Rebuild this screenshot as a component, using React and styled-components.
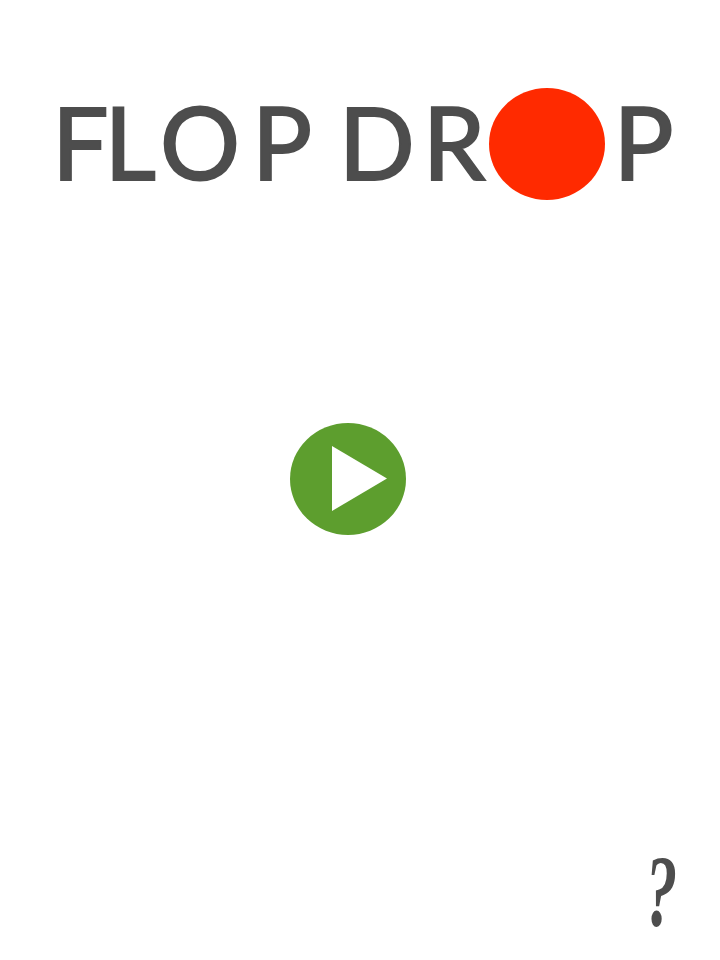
import React from 'react';
import styled, { createGlobalStyle } from 'styled-components';

const GlobalStyle = createGlobalStyle`
  html, body {
    margin: 0;
    padding: 0;
    background: #fff;
  }
`;

const Screen = styled.div`
  width: 720px;
  height: 960px;
  box-sizing: border-box;
  padding: 88px 33px 26px 52px;
  display: flex;
  flex-direction: column;
  overflow: hidden;
`;

const Logo = styled.h1`
  margin: 0;
  height: 112px;
  display: flex;
  align-items: flex-start;
  font-family: Lato, "Open Sans", sans-serif;
  font-weight: 400;
  font-size: 100px;
  line-height: 106px;
  color: #4d4d4d;
  white-space: pre;
  -webkit-text-stroke: 2px #4d4d4d;
`;

const Letter = styled.span`
  display: block;
  margin-left: ${(p) => p.$kern}px;
`;

const Ball = styled.span`
  display: block;
  flex: none;
  width: 116px;
  height: 112px;
  margin-left: ${(p) => p.$kern}px;
  border-radius: 50%;
  background: #ff2a00;
`;

const PlayRow = styled.div`
  margin-top: 223px;
  padding-left: 238px;
  flex: 1;
`;

const PlayButton = styled.button`
  display: flex;
  align-items: center;
  justify-content: center;
  width: 116px;
  height: 112px;
  padding: 0 0 0 23px;
  border: none;
  border-radius: 50%;
  background: #5d9e2e;
  cursor: pointer;

  svg {
    display: block;
  }
`;

const Footer = styled.div`
  display: flex;
  justify-content: flex-end;
`;

const HelpButton = styled.button`
  padding: 0;
  border: none;
  background: none;
  font-family: "Liberation Serif", serif;
  font-style: italic;
  font-weight: 700;
  font-size: 102px;
  line-height: 84px;
  color: #4d4d4d;
  cursor: pointer;
  transform: scaleX(0.62);
`;

const firstWord = [['F', 0], ['L', -4], ['O', 4], ['P', 12], [' ', 0], ['D', 1], ['R', 8]];

export default function App() {
  return (
    <>
      <GlobalStyle />
      <Screen>
        <Logo aria-label="FLOP DROP">
          {firstWord.map(([ch, kern], i) => (
            <Letter key={i} $kern={kern}>{ch}</Letter>
          ))}
          <Ball $kern={4} />
          <Letter $kern={8}>P</Letter>
        </Logo>
        <PlayRow>
          <PlayButton aria-label="Play">
            <svg width="56" height="66" viewBox="0 0 56 66">
              <polygon points="0,0 55,32.5 0,65" fill="#fff" />
            </svg>
          </PlayButton>
        </PlayRow>
        <Footer>
          <HelpButton>?</HelpButton>
        </Footer>
      </Screen>
    </>
  );
}
